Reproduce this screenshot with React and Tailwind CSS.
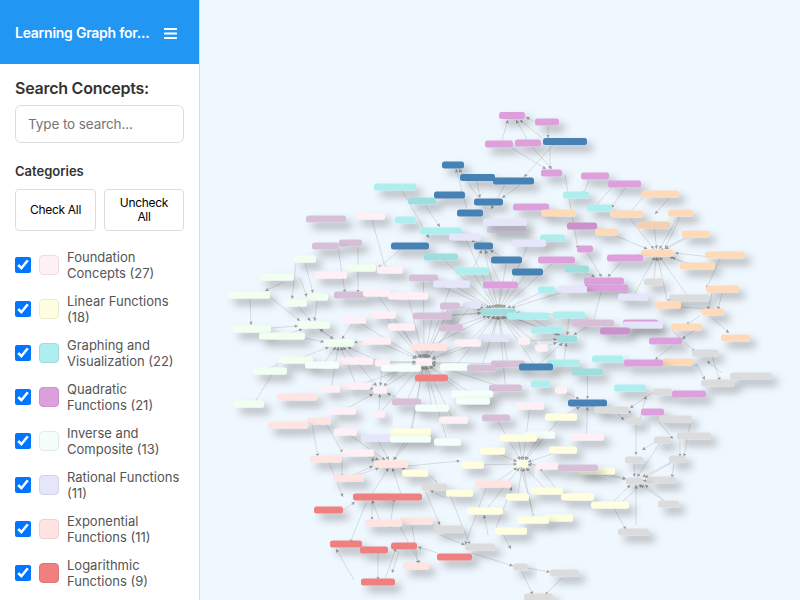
const C = {
  found: '#FFF0F5', linear: '#FFFFE0', cyan: '#AFEEEE', pink: '#DDA0DD', mint: '#F5FFFA', honey: '#F0FFF0',
  lav: '#E6E6FA', misty: '#FFE4E1', coral: '#F08080', blue: '#4682B4', peach: '#FFDAB9', gray: '#DCDCDC', thistle: '#D8BFD8',
  cyanDim: '#9FDEDE', pinkDim: '#CC90CC', peachDim: '#F6D0AE', lavDim: '#D9D3E6',
};

// x1, x2, centre y, colour
const nodes = [
  [499, 525, 115.5, 'pink'], [535, 559, 122, 'pink'], [485, 513, 144, 'pink'], [515, 541, 143, 'pink'], [543, 587, 141.5, 'blue'],
  [442, 464, 165, 'blue'], [541, 562, 173, 'pink'], [581, 609, 176, 'pink'], [460, 495, 177.5, 'blue'], [493, 534, 181, 'blue'],
  [608, 641, 184, 'pink'], [374, 416, 187, 'cyan'], [434, 465, 195, 'blue'], [563, 589, 195, 'cyan'], [642, 679, 194, 'peach'],
  [408, 436, 201, 'cyanDim'], [474, 503, 202, 'blue'], [513, 549, 207, 'pink'], [587, 612, 208, 'cyan'], [541, 576, 213, 'peach'],
  [457, 483, 213, 'blue'], [610, 643, 214, 'peach'], [668, 693, 213, 'peach'], [355, 385, 216, 'found'], [395, 416, 220, 'cyan'],
  [306, 346, 219, 'thistle'], [487, 526, 229.5, 'lavDim'], [483, 527, 222, 'lav'], [567, 597, 226, 'pinkDim'], [638, 670, 225, 'peachDim'],
  [420, 462, 231, 'cyan'], [595, 618, 232, 'peach'], [682, 709, 234, 'peach'], [449, 481, 237, 'lav'], [540, 565, 238, 'cyan'],
  [512, 546, 243, 'lav'], [339, 362, 243, 'thistle'], [391, 429, 246, 'blue'], [474, 493, 246, 'blue'], [312, 339, 246, 'thistle'],
  [577, 593, 249, 'pink'], [641, 673, 253, 'peach'], [705, 745, 255, 'peach'], [424, 458, 257, 'cyanDim'], [294, 316, 259, 'honey'],
  [491, 522, 260, 'blue'], [538, 575, 260, 'pink'], [607, 643, 258, 'pink'], [680, 715, 266, 'peach'], [347, 376, 268, 'honey'],
  [565, 589, 269, 'cyanDim'], [377, 403, 270, 'found'], [455, 489, 271, 'cyan'], [512, 543, 272, 'blue'], [314, 347, 275, 'found'],
  [260, 294, 277, 'honey'], [409, 438, 278, 'thistle'], [584, 624, 281, 'pink'], [644, 663, 282, 'gray'], [483, 518, 285, 'pink'],
  [433, 470, 284, 'lav'], [586, 628, 288, 'pink'], [538, 555, 290, 'cyan'], [558, 587, 289, 'lav'], [706, 739, 289, 'peach'],
  [228, 270, 295, 'honey'], [334, 365, 295, 'thistle'], [363, 390, 293, 'found'], [388, 428, 296, 'found'], [307, 328, 297, 'honey'],
  [618, 648, 297, 'lav'], [669, 709, 298, 'gray'], [284, 307, 303, 'honey'], [463, 481, 305, 'lav'], [440, 460, 306, 'thistle'],
  [655, 681, 305, 'peach'], [702, 724, 312, 'peach'], [481, 516, 312, 'cyanDim'], [507, 549, 316, 'cyan'], [553, 585, 315, 'cyan'],
  [440, 452, 316, 'thistle'], [371, 396, 315, 'found'], [413, 452, 316, 'thistle'], [344, 366, 320, 'found'], [572, 614, 323, 'thistle'],
  [623, 658, 323, 'pink'], [623, 663, 325, 'lav'], [298, 330, 325, 'honey'], [671, 702, 327, 'peach'], [388, 415, 327, 'found'],
  [439, 463, 328, 'thistle'], [233, 271, 329, 'honey'], [531, 563, 330, 'cyan'], [600, 630, 331, 'pinkDim'], [259, 305, 336, 'honey'],
  [721, 750, 338, 'peach'], [477, 509, 338, 'lav'], [557, 577, 339, 'cyanDim'], [649, 682, 341, 'pink'], [518, 530, 341, 'found'],
  [362, 391, 341, 'found'], [324, 354, 343, 'honey'], [454, 481, 343, 'found'], [410, 447, 347, 'misty'], [535, 548, 348, 'found'],
  [692, 718, 353, 'gray'], [592, 623, 359, 'cyan'], [278, 313, 360, 'honey'], [339, 373, 361, 'found'], [375, 390, 363, 'found'],
  [416, 432, 362, 'found'], [491, 525, 364, 'thistle'], [547, 580, 363, 'cyan'], [662, 693, 362, 'peach'], [624, 663, 363, 'pink'],
  [305, 339, 365, 'mint'], [381, 421, 368, 'mint'], [440, 470, 367, 'mint'], [519, 553, 367, 'blue'], [467, 496, 368, 'thistle'],
  [253, 287, 371, 'honey'], [572, 603, 372, 'cyanDim'], [730, 772, 376, 'gray'], [415, 448, 378, 'coral'], [701, 735, 383, 'gray'],
  [531, 550, 384, 'cyan'], [342, 371, 386, 'found'], [489, 522, 388, 'thistle'], [614, 646, 388, 'cyan'], [322, 340, 389, 'found'],
  [373, 387, 390, 'found'], [555, 567, 390, 'found'], [653, 672, 392, 'gray'], [451, 493, 394, 'mint'], [672, 706, 394, 'pink'],
  [277, 317, 397, 'misty'], [456, 490, 401, 'mint'], [392, 421, 402, 'thistle'], [568, 607, 403, 'blue'], [234, 264, 404, 'honey'],
  [516, 544, 406, 'found'], [415, 449, 408, 'mint'], [594, 629, 410, 'gray'], [641, 664, 412, 'pink'], [329, 356, 411, 'found'],
  [373, 385, 414, 'found'], [545, 577, 417, 'linear'], [482, 510, 418, 'thistle'], [659, 692, 419, 'gray'], [439, 468, 420, 'found'],
  [627, 642, 421, 'gray'], [307, 331, 421, 'misty'], [268, 308, 425, 'misty'], [334, 357, 432, 'found'], [390, 431, 432, 'linear'],
  [525, 555, 435, 'mint'], [677, 711, 436, 'gray'], [569, 604, 437, 'found'], [500, 537, 438, 'linear'], [361, 392, 438, 'lav'],
  [390, 431, 439, 'mint'], [654, 670, 440, 'gray'], [434, 461, 442, 'mint'], [549, 577, 450, 'linear'], [480, 505, 451, 'linear'],
  [342, 374, 453, 'found'], [310, 342, 459, 'misty'], [669, 686, 459, 'gray'], [625, 643, 460, 'gray'], [374, 408, 464, 'misty'],
  [517, 528, 464, 'linear'], [461, 484, 465, 'linear'], [536, 558, 466, 'found'], [578, 615, 471, 'linear'], [558, 598, 468, 'thistle'],
  [402, 428, 473, 'linear'], [333, 364, 478, 'misty'], [647, 676, 480, 'gray'], [626, 643, 481, 'gray'], [475, 511, 484, 'misty'],
  [422, 447, 487, 'gray'], [531, 563, 491, 'linear'], [446, 473, 493, 'linear'], [561, 594, 497, 'linear'], [506, 529, 497, 'linear'],
  [353, 387, 497, 'coral'], [382, 422, 497, 'coral'], [658, 679, 504, 'gray'], [591, 629, 505, 'linear'], [314, 343, 510, 'coral'],
  [467, 503, 511, 'linear'], [544, 573, 518, 'linear'], [518, 549, 520, 'linear'], [400, 433, 521, 'misty'], [365, 402, 523, 'misty'],
  [434, 464, 529, 'gray'], [495, 527, 531, 'linear'], [618, 649, 532, 'gray'], [330, 362, 544, 'coral'], [391, 417, 546, 'coral'],
  [465, 495, 547, 'gray'], [360, 388, 550, 'coral'], [437, 472, 557, 'coral'], [403, 429, 566, 'misty'], [513, 528, 567, 'gray'],
  [550, 579, 573, 'gray'], [361, 395, 582, 'coral'], [524, 553, 597, 'gray'],
];

// nodes that collect many incoming edges: x, y, reach
const hubs = [
  [498, 312, 82], [424, 362, 86], [380, 390, 48], [522, 464, 62], [339, 343, 48], [657, 253, 58], [634, 481, 50],
  [378, 464, 48], [605, 284, 44], [482, 257, 34], [590, 403, 36], [311, 325, 34], [560, 340, 40],
];

// edges read off the picture, the arrow sits on the second point
const drawnEdges = [
  [535, 122, 526, 117], [502, 140, 508, 120], [527, 139, 516, 120], [542, 138, 520, 120], [548, 126, 548, 138],
  [512, 148, 546, 169], [532, 147, 552, 169], [550, 145, 550, 169], [553, 145, 524, 177], [467, 209, 456, 169],
  [486, 209, 459, 169], [477, 181, 480, 198], [520, 185, 502, 198], [505, 185, 491, 209], [402, 190, 429, 238],
  [425, 205, 440, 227], [372, 220, 386, 270], [400, 250, 378, 268], [338, 247, 345, 293], [358, 247, 358, 293],
  [284, 282, 265, 291], [250, 298, 251, 325], [300, 278, 307, 297], [296, 263, 292, 299], [305, 263, 313, 293],
  [270, 297, 300, 321], [271, 328, 298, 326], [305, 338, 324, 342], [278, 365, 253, 405], [263, 372, 283, 361],
  [565, 175, 578, 249], [589, 180, 583, 195], [612, 187, 594, 208], [625, 188, 611, 208], [643, 197, 629, 214],
  [670, 197, 655, 214], [680, 217, 665, 249], [686, 237, 660, 251], [720, 258, 675, 253], [690, 267, 672, 257],
  [720, 259, 706, 289], [712, 293, 708, 310], [722, 293, 718, 310], [660, 310, 671, 298], [700, 316, 686, 325],
  [680, 307, 710, 309], [695, 330, 682, 339], [710, 316, 729, 333], [672, 330, 695, 352], [722, 373, 707, 361],
  [712, 356, 720, 381], [698, 366, 669, 360], [696, 363, 705, 380], [673, 345, 655, 360], [656, 390, 630, 408],
  [632, 415, 628, 410], [640, 418, 646, 396], [659, 422, 673, 439], [680, 441, 680, 457], [690, 424, 684, 457],
  [671, 463, 645, 478], [655, 442, 642, 450], [674, 462, 672, 478], [664, 500, 645, 485], [636, 525, 636, 485],
  [614, 508, 626, 530], [622, 502, 642, 484], [604, 475, 626, 479], [636, 420, 636, 455], [618, 414, 624, 420],
  [521, 570, 533, 595], [562, 578, 545, 595], [472, 553, 513, 566], [528, 568, 550, 572], [499, 527, 511, 549],
  [440, 535, 465, 545], [425, 490, 440, 525], [448, 490, 470, 545], [486, 488, 465, 545], [412, 526, 418, 564],
  [438, 553, 418, 547], [399, 551, 392, 573], [378, 552, 378, 580], [384, 582, 396, 548], [354, 580, 336, 549],
  [343, 510, 355, 502], [366, 503, 350, 543], [372, 503, 372, 520], [400, 527, 420, 564], [390, 528, 394, 498],
  [382, 527, 372, 500], [329, 462, 343, 497], [312, 424, 318, 457], [325, 422, 343, 453], [342, 457, 342, 477],
  [340, 481, 373, 466], [374, 456, 372, 462], [534, 516, 520, 465], [565, 500, 540, 468], [496, 528, 512, 487],
  [488, 535, 484, 515], [445, 498, 430, 490], [430, 476, 445, 490], [408, 466, 460, 461], [436, 480, 436, 490],
];

const round = (n) => Math.round(n * 10) / 10;

// end of a line from (fx, fy) cut at the border of the node it runs into
function cutAtNode(fx, fy, node) {
  const tx = (node[0] + node[1]) / 2;
  const ty = node[2];
  const dx = fx - tx;
  const dy = fy - ty;
  const t = Math.min(
    dx ? (node[1] - node[0]) / 2 / Math.abs(dx) : 1,
    dy ? 4 / Math.abs(dy) : 1,
    1,
  );
  return [round(tx + dx * t), round(ty + dy * t)];
}

function nearestNode(x, y) {
  let best = nodes[0];
  let bestDist = Infinity;
  nodes.forEach((n) => {
    const d = Math.hypot((n[0] + n[1]) / 2 - x, n[2] - y);
    if (d < bestDist) {
      bestDist = d;
      best = n;
    }
  });
  return best;
}

const edges = [];
hubs.forEach(([hx, hy, reach]) => {
  const hub = nearestNode(hx, hy);
  nodes.forEach((n) => {
    const cx = (n[0] + n[1]) / 2;
    const d = Math.hypot(cx - hx, n[2] - hy);
    if (n === hub || d > reach || d < 14) return;
    const [x2, y2] = cutAtNode(cx, n[2], hub);
    edges.push([round(cx), n[2], x2, y2]);
  });
});
drawnEdges.forEach((e) => edges.push(e));

const categories = [
  { label: 'Foundation Concepts (27)', swatch: 'bg-[#FFF0F5] border-[#ecdde3]' },
  { label: 'Linear Functions (18)', swatch: 'bg-[#FFFFE0] border-[#ebebcf]' },
  { label: 'Graphing and Visualization (22)', swatch: 'bg-[#AFEEEE] border-[#a0dcdc]' },
  { label: 'Quadratic Functions (21)', swatch: 'bg-[#DDA0DD] border-[#cc93cc]' },
  { label: 'Inverse and Composite (13)', swatch: 'bg-[#F5FFFA] border-[#e2ece7]' },
  { label: 'Rational Functions (11)', swatch: 'bg-[#E6E6FA] border-[#d4d4e7]' },
  { label: 'Exponential Functions (11)', swatch: 'bg-[#FFE4E1] border-[#ecd2cf]' },
  { label: 'Logarithmic Functions (9)', swatch: 'bg-[#F08080] border-[#dd7676]' },
];

function Graph() {
  return (
    <svg className="block h-full w-full" viewBox="200 0 600 600">
      <defs>
        <filter id="nodeShadow" x="-60%" y="-200%" width="220%" height="700%">
          <feDropShadow dx="6" dy="6" stdDeviation="4.5" floodColor="#000" floodOpacity="0.3" />
        </filter>
        <marker id="arrow" viewBox="0 0 6 6" refX="6" refY="3" markerWidth="3.5" markerHeight="3.5" markerUnits="userSpaceOnUse" orient="auto">
          <path d="M0 0L6 3L0 6Z" fill="#a0a0a0" />
        </marker>
      </defs>
      <g stroke="#bdbdbd" strokeWidth="0.5">
        {edges.map((e, i) => (
          <line key={i} x1={e[0]} y1={e[1]} x2={e[2]} y2={e[3]} markerEnd="url(#arrow)" />
        ))}
      </g>
      {nodes.map((n, i) => (
        <rect
          key={i}
          x={n[0]}
          y={n[2] - 3.5}
          width={n[1] - n[0]}
          height="7"
          rx="2.5"
          fill={C[n[3]]}
          filter="url(#nodeShadow)"
        />
      ))}
    </svg>
  );
}

export default function App() {
  return (
    <div className="flex h-screen w-full overflow-hidden bg-[#F0F8FF] font-[Inter,sans-serif]">
      <aside className="w-[200px] shrink-0 overflow-hidden border-r border-[#ddd] bg-white">
        <div className="flex h-16 items-center bg-[#2196F3] pt-[2px] pl-[15px]">
          <h1 className="w-[140px] text-sm font-semibold tracking-[-0.25px] whitespace-nowrap text-white">Learning Graph for...</h1>
          <svg className="ml-[9px] shrink-0" width="13" height="11" viewBox="0 0 13 11" fill="#fff">
            <rect y="0" width="13" height="2" rx="0.5" />
            <rect y="4.5" width="13" height="2" rx="0.5" />
            <rect y="9" width="13" height="2" rx="0.5" />
          </svg>
        </div>

        <div className="px-[15px] pt-[14px]">
          <label className="block text-base leading-5 font-semibold tracking-[-0.25px] text-[#333]">Search Concepts:</label>
          <input
            type="text"
            placeholder="Type to search..."
            className="mt-[7px] h-[38px] w-[169px] rounded-md border border-[#ddd] px-3 text-[13.5px] tracking-[-0.1px] text-[#333] placeholder:text-[#757575]"
          />

          <h2 className="mt-[20px] text-[13px] leading-4 font-semibold text-[#333]">Categories</h2>
          <div className="mt-[10px] flex gap-2">
            <button className="h-[42px] w-[81px] rounded border border-[#ddd] bg-white text-xs leading-[14px] tracking-[-0.3px] text-black">Check All</button>
            <button className="h-[42px] w-[80px] rounded border border-[#ddd] bg-white px-2 text-xs leading-[14px] tracking-[-0.3px] text-black">Uncheck All</button>
          </div>

          <div className="mt-[18px] flex flex-col gap-3">
            {categories.map((cat) => (
              <label key={cat.label} className="flex h-8 items-center">
                <input type="checkbox" defaultChecked className="m-0 h-4 w-4 shrink-0" />
                <span className={`ml-2 h-5 w-5 shrink-0 rounded-[4px] border ${cat.swatch}`} />
                <span className="ml-2 w-[118px] text-[13px] leading-4 text-[#555]">{cat.label}</span>
              </label>
            ))}
          </div>
        </div>
      </aside>

      <main className="min-w-0 flex-1">
        <Graph />
      </main>
    </div>
  );
}
